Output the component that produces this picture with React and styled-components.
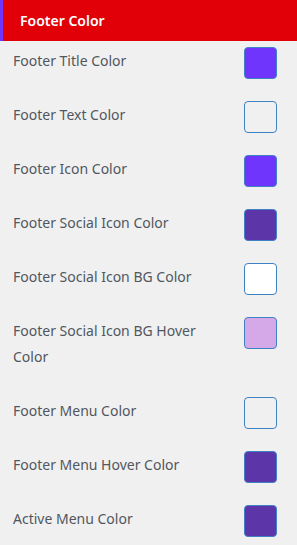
import React from "react";
import styled, { createGlobalStyle } from "styled-components";

const Global = createGlobalStyle`
  html, body { margin: 0; padding: 0; background: #f0f0f1; }
  body { font-family: "Noto Sans", "Open Sans", sans-serif; }
`;

const Panel = styled.div`
  width: 297px;
  min-height: 545px;
  background: #f0f0f1;
  display: flex;
  flex-direction: column;
`;

const Header = styled.div`
  height: 41px;
  background: #e10008;
  border-left: 3px solid #6f35fc;
  display: flex;
  align-items: center;
  padding-left: 17px;
  color: #ffffff;
  font-size: 14px;
  font-weight: 600;
`;

const List = styled.div`
  display: flex;
  flex-direction: column;
`;

const Row = styled.div`
  display: flex;
  justify-content: space-between;
  align-items: flex-start;
  padding: 0 20px 0 13px;
`;

const Label = styled.div`
  width: 200px;
  padding: 7px 0 21px;
  font-size: 14px;
  line-height: 26px;
  color: #50575e;
`;

const Swatch = styled.div`
  margin-top: 6px;
  width: 33px;
  height: 32px;
  box-sizing: border-box;
  border: 1px solid #3f82c4;
  border-radius: 4px;
  background: ${(p) => p.$color};
`;

const items = [
  ["Footer Title Color", "#6f35fc"],
  ["Footer Text Color", "#f0f0f1"],
  ["Footer Icon Color", "#6f35fc"],
  ["Footer Social Icon Color", "#5c35a8"],
  ["Footer Social Icon BG Color", "#ffffff"],
  ["Footer Social Icon BG Hover Color", "#d5a9e7"],
  ["Footer Menu Color", "#f0f0f1"],
  ["Footer Menu Hover Color", "#5c35a8"],
  ["Active Menu Color", "#5c35a8"],
];

export default function App() {
  return (
    <Panel>
      <Global />
      <Header>Footer Color</Header>
      <List>
        {items.map(([label, color]) => (
          <Row key={label}>
            <Label>{label}</Label>
            <Swatch $color={color} />
          </Row>
        ))}
      </List>
    </Panel>
  );
}
